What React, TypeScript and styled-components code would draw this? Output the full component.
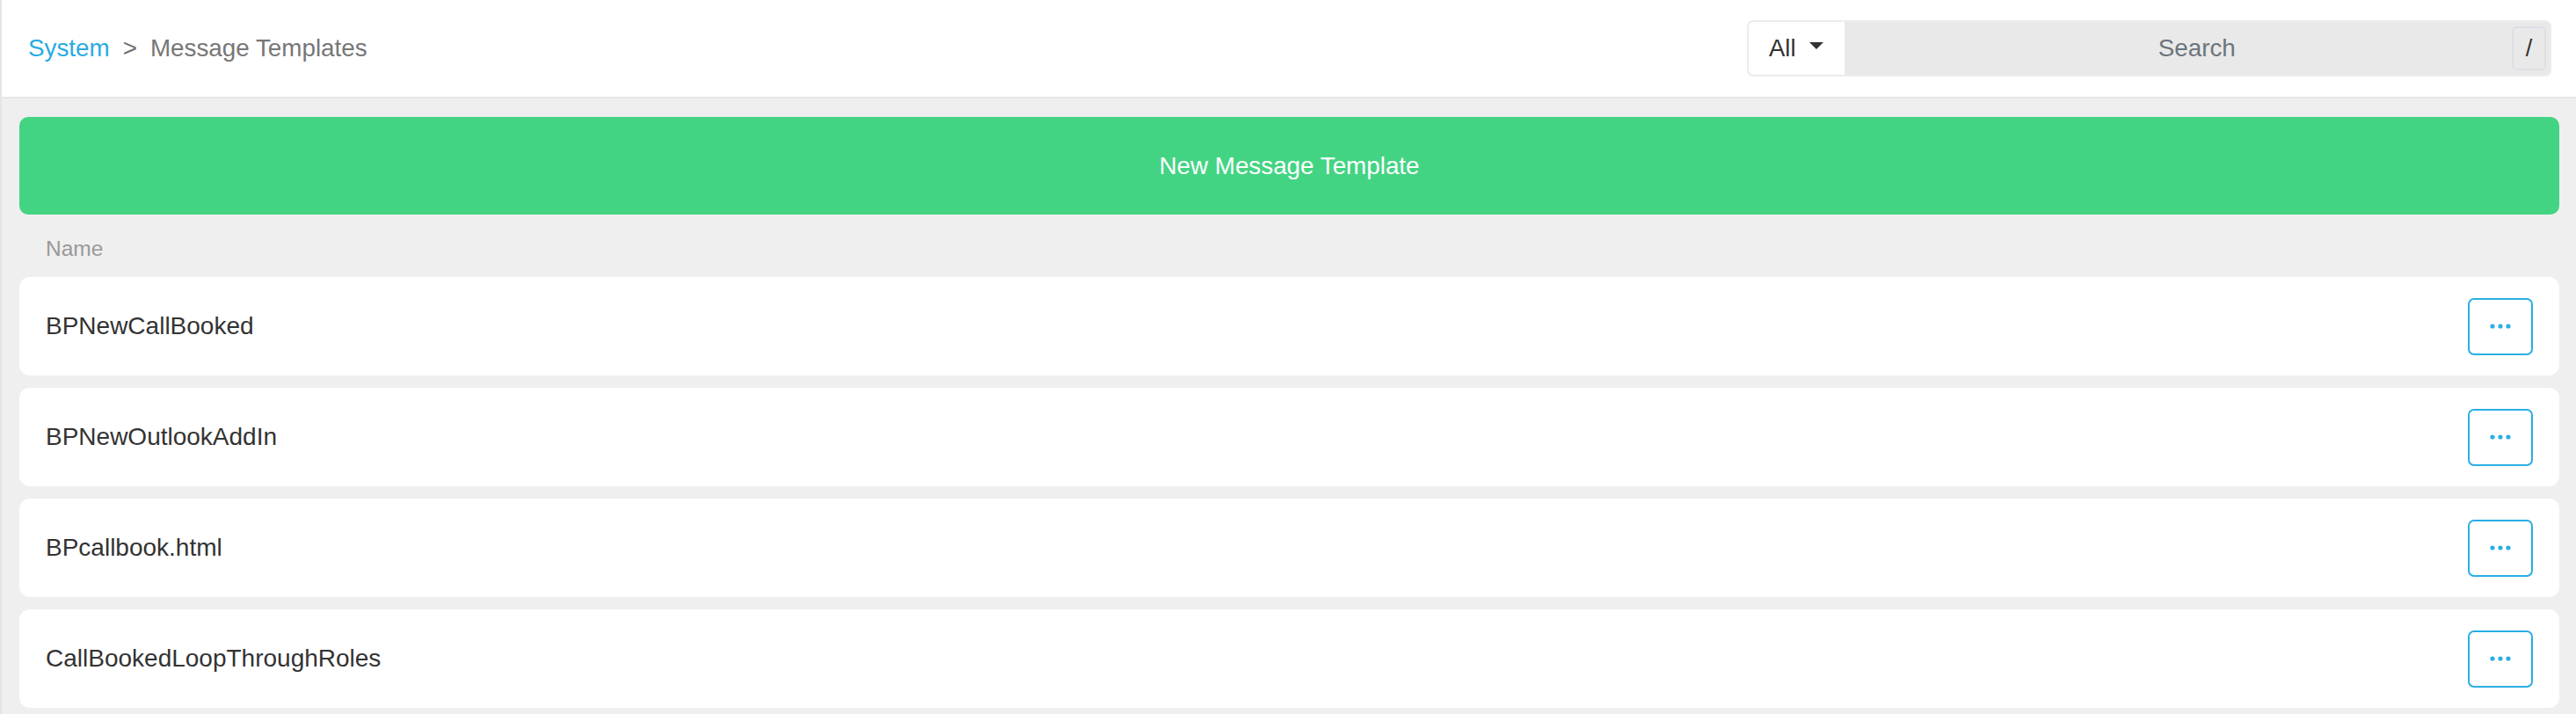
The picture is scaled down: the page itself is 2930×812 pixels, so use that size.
import React from "react";
import styled, { createGlobalStyle } from "styled-components";

const GlobalStyle = createGlobalStyle`
  html, body {
    margin: 0;
    padding: 0;
    background: #efefef;
    font-family: "Liberation Sans", Arial, Helvetica, sans-serif;
  }
`;

const Page = styled.div`
  min-height: 812px;
  border-left: 2px solid #e4e4e4;
  box-sizing: border-box;
`;

const Header = styled.header`
  height: 110px;
  background: #fff;
  border-bottom: 2px solid #e6e6e6;
  display: flex;
  align-items: center;
  justify-content: space-between;
  padding: 0 28px 0 30px;
`;

const Breadcrumb = styled.nav`
  display: flex;
  align-items: center;
  font-size: 27.8px;
  color: #777;
`;

const Crumb = styled.a`
  color: #29abe2;
  text-decoration: none;
`;

const Separator = styled.span`
  margin: 0 15px;
  color: #6f6f6f;
`;

const SearchGroup = styled.div`
  display: flex;
  align-items: stretch;
  width: 915px;
  height: 64px;
  box-sizing: border-box;
  border: 2px solid #ececec;
  border-radius: 7px;
  background: #e9e9e9;
  overflow: hidden;
`;

const Scope = styled.button`
  display: flex;
  align-items: center;
  gap: 15px;
  padding: 0 24px 0 23px;
  border: none;
  background: #fff;
  font-family: inherit;
  font-size: 27.5px;
  color: #333;
`;

const Caret = styled.span`
  width: 0;
  height: 0;
  border-left: 8px solid transparent;
  border-right: 8px solid transparent;
  border-top: 8px solid #333;
  margin-top: -6px;
`;

const SearchInput = styled.div`
  flex: 1;
  display: flex;
  align-items: center;
  justify-content: center;
  padding-left: 43px;
  font-size: 27.8px;
  color: #6c757d;
`;

const Kbd = styled.kbd`
  align-self: center;
  width: 39px;
  height: 50px;
  margin-right: 4px;
  box-sizing: border-box;
  border: 2px solid #dce0e5;
  border-radius: 6px;
  display: flex;
  align-items: center;
  justify-content: center;
  font-family: "Liberation Sans", Arial, sans-serif;
  font-size: 27px;
  color: #333;
`;

const Main = styled.main`
  padding: 21px 19px 0 20px;
`;

const NewButton = styled.button`
  width: 100%;
  height: 111px;
  border: none;
  border-radius: 10px;
  background: #43d483;
  color: #fff;
  font-family: inherit;
  font-size: 27.8px;
`;

const ColumnLabel = styled.div`
  height: 65px;
  padding: 6px 30px 0;
  display: flex;
  align-items: center;
  font-size: 24.5px;
  color: #999;
`;

const List = styled.div`
  display: flex;
  flex-direction: column;
  gap: 14px;
`;

const Row = styled.div`
  height: 112px;
  background: #fff;
  border-radius: 12px;
  display: flex;
  align-items: center;
  justify-content: space-between;
  padding: 0 30px;
  font-size: 28px;
  color: #333;
`;

const MoreButton = styled.button`
  width: 74px;
  height: 65px;
  box-sizing: border-box;
  border: 2px solid #2aaee4;
  border-radius: 7px;
  background: #fff;
  display: flex;
  align-items: center;
  justify-content: center;
  padding: 0;
`;

const templates = [
  "BPNewCallBooked",
  "BPNewOutlookAddIn",
  "BPcallbook.html",
  "CallBookedLoopThroughRoles",
];

const Dots = () => (
  <svg width="24" height="6" viewBox="0 0 24 6">
    <circle cx="3" cy="3" r="2.6" fill="#2aaee4" />
    <circle cx="12" cy="3" r="2.6" fill="#2aaee4" />
    <circle cx="21" cy="3" r="2.6" fill="#2aaee4" />
  </svg>
);

const App = (): JSX.Element => (
  <>
    <GlobalStyle />
    <Page>
      <Header>
        <Breadcrumb>
          <Crumb href="#">System</Crumb>
          <Separator>&gt;</Separator>
          <span>Message Templates</span>
        </Breadcrumb>
        <SearchGroup>
          <Scope>
            All
            <Caret />
          </Scope>
          <SearchInput>Search</SearchInput>
          <Kbd>/</Kbd>
        </SearchGroup>
      </Header>
      <Main>
        <NewButton>New Message Template</NewButton>
        <ColumnLabel>Name</ColumnLabel>
        <List>
          {templates.map(name => (
            <Row key={name}>
              <span>{name}</span>
              <MoreButton>
                <Dots />
              </MoreButton>
            </Row>
          ))}
        </List>
      </Main>
    </Page>
  </>
);

export default App;
